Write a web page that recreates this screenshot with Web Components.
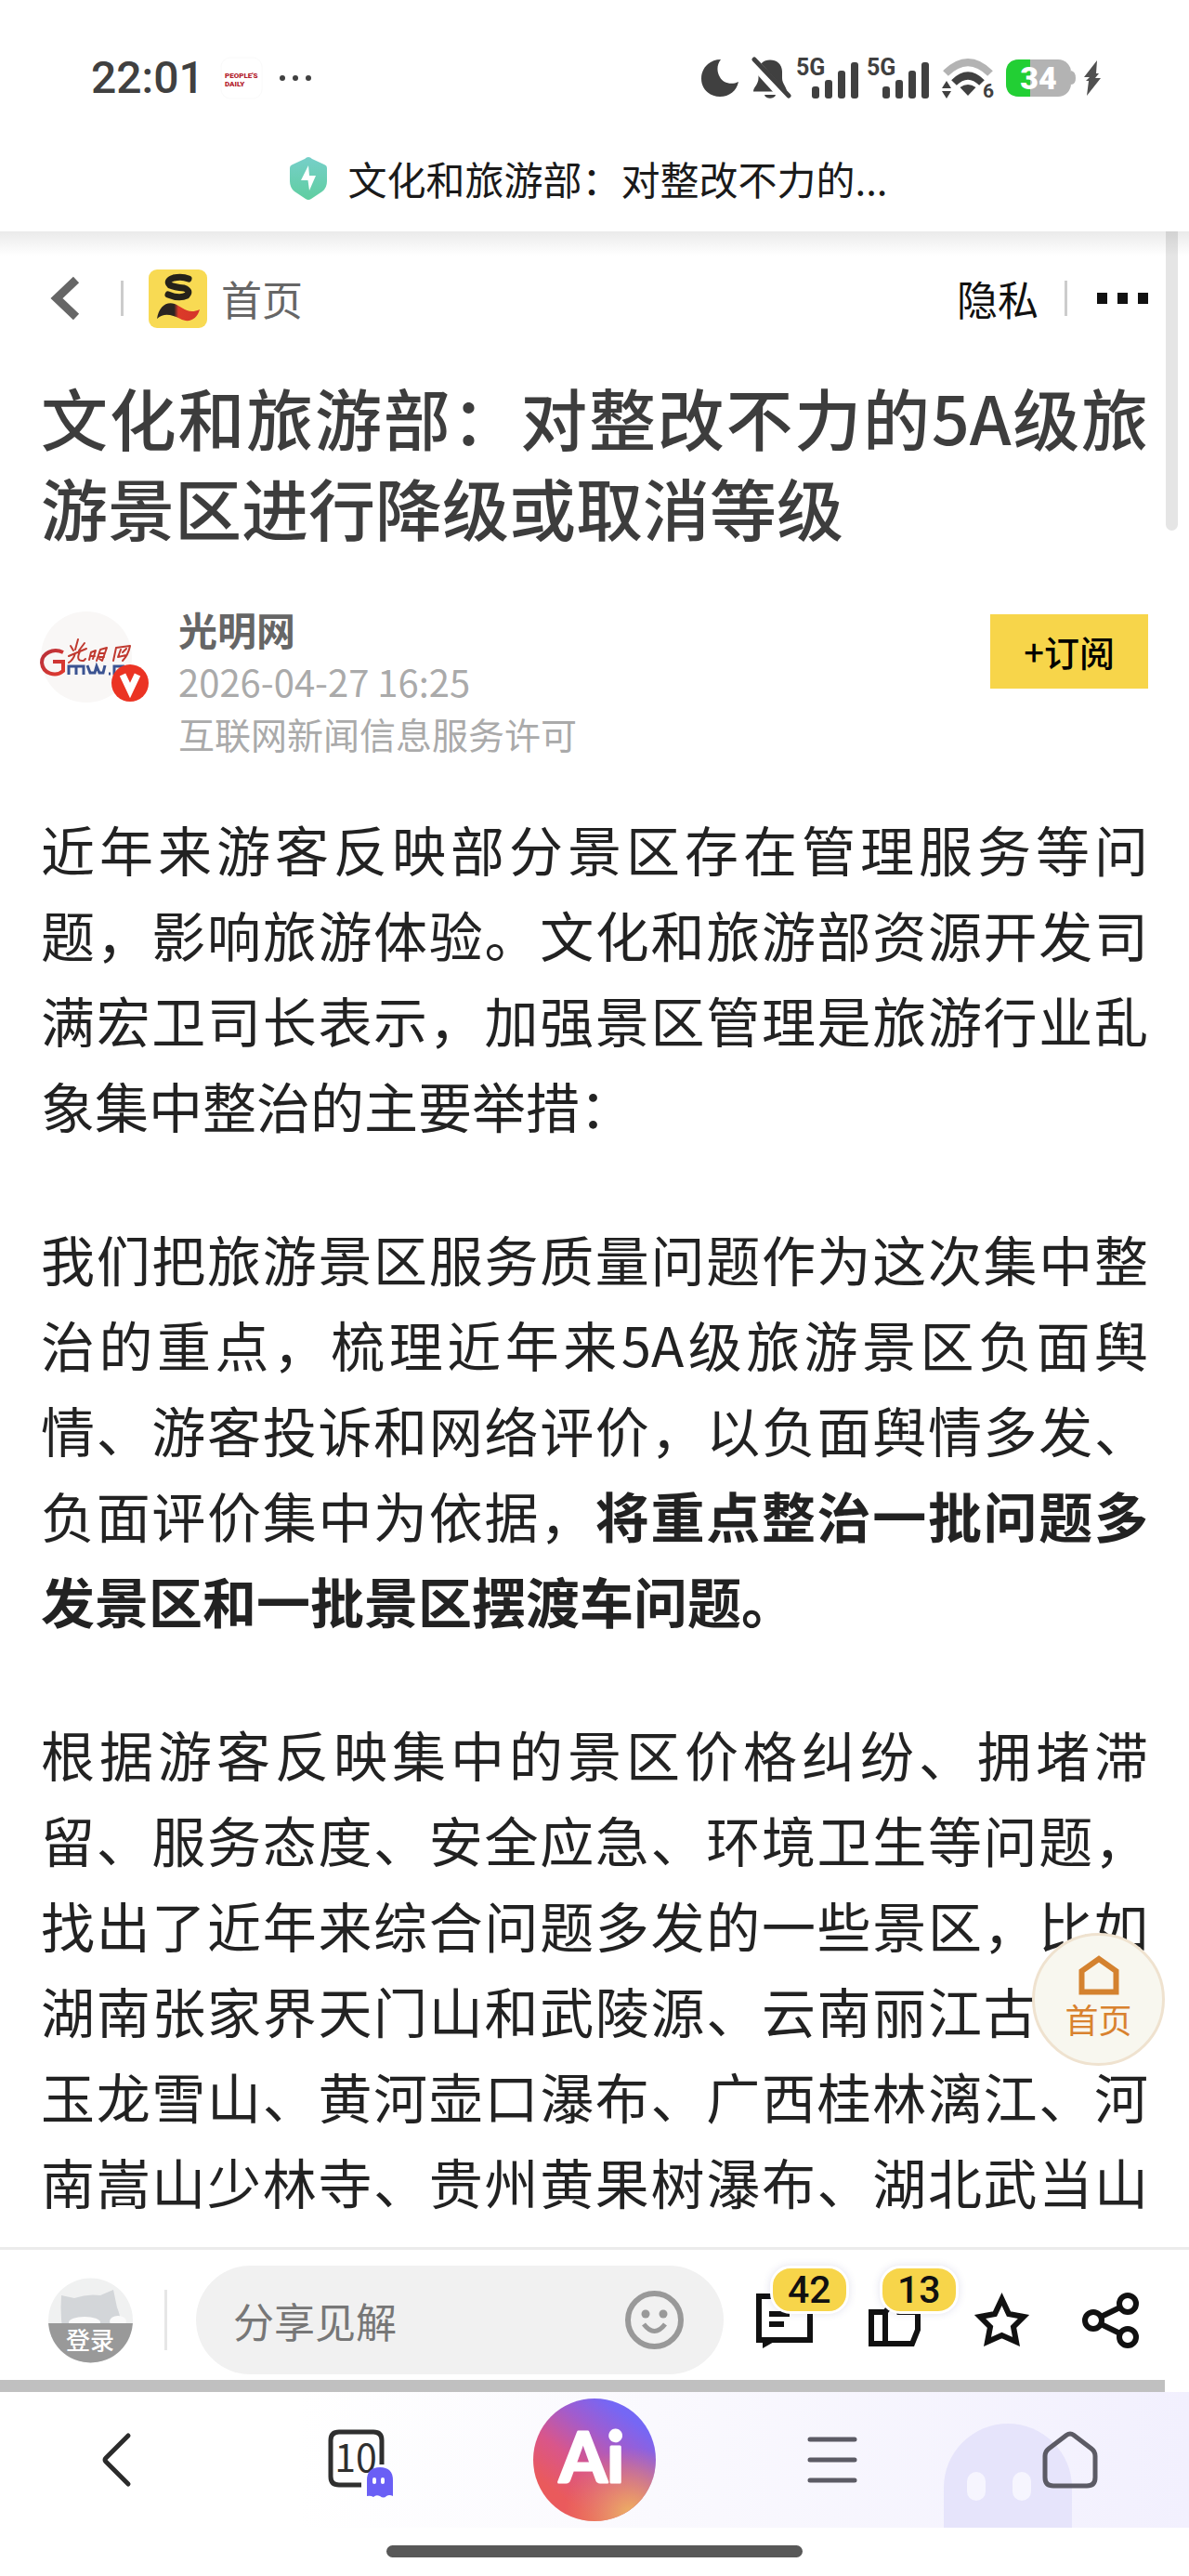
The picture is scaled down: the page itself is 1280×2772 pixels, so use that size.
<!DOCTYPE html>
<html lang="zh-CN">
<head>
<meta charset="utf-8">
<meta name="viewport" content="width=device-width, initial-scale=1">
<title>文化和旅游部：对整改不力的5A级旅游景区进行降级或取消等级</title>
<style>
    :root {
        --yellow: #f7d54a;
        --status-ink: #404040;
        --font-cjk: "Noto Sans CJK SC", "Noto Sans", sans-serif;
        --font-num: Roboto, "Noto Sans CJK SC", sans-serif;
        --edge: 44px;
    }
    body {
        margin: 0;
        min-height: 100vh;
        display: flex;
        flex-direction: column;
        background: #fff;
        font-family: var(--font-cjk);
        color: #222;
    }
    main {
        flex: 1;
        position: relative;
    }
</style>
</head>
<body>
<status-bar time="22:01" battery="34"></status-bar>
<title-bar>文化和旅游部：对整改不力的...</title-bar>
<main>
    <site-header></site-header>
    <news-article>
        <span slot="title">文化和旅游部：对整改不力的5A级旅游景区进行降级或取消等级</span>
        <article-author slot="author" name="光明网" date="2026-04-27 16:25" licence="互联网新闻信息服务许可"></article-author>
        <p>近年来游客反映部分景区存在管理服务等问题，影响旅游体验。文化和旅游部资源开发司满宏卫司长表示，加强景区管理是旅游行业乱象集中整治的主要举措：</p>
        <p>我们把旅游景区服务质量问题作为这次集中整治的重点，梳理近年来5A级旅游景区负面舆情、游客投诉和网络评价，以负面舆情多发、负面评价集中为依据，<strong>将重点整治一批问题多发景区和一批景区摆渡车问题。</strong></p>
        <p>根据游客反映集中的景区价格纠纷、拥堵滞留、服务态度、安全应急、环境卫生等问题，找出了近年来综合问题多发的一些景区，比如湖南张家界天门山和武陵源、云南丽江古城、玉龙雪山、黄河壶口瀑布、广西桂林漓江、河南嵩山少林寺、贵州黄果树瀑布、湖北武当山</p>
    </news-article>
    <home-float>首页</home-float>
</main>
<comment-bar comments="42" likes="13"></comment-bar>
<browser-nav tabs="10"></browser-nav>

<script>
const RESET = `
    * { box-sizing: border-box; }
    svg { display: block; flex: none; }
    button {
        display: block;
        margin: 0;
        padding: 0;
        border: 0;
        background: none;
        font: inherit;
        color: inherit;
        cursor: pointer;
    }
    a { color: inherit; text-decoration: none; }
`;

/* Small base class: each element only supplies its template */
class BaseElement extends HTMLElement {
    constructor() {
        super();
        this.attachShadow({ mode: 'open' });
    }

    connectedCallback() {
        this.shadowRoot.innerHTML = `<style>${RESET}</style>${this.template()}`;
    }

    attr(name) {
        return this.getAttribute(name) || '';
    }
}

const signalIcon = () => `
    <svg class="signal" width="70" height="62" viewBox="-2 -8 70 62" aria-label="5G">
        <text x="0" y="20" font-family="Roboto, sans-serif" font-weight="700" font-size="25" fill="#404040">5G</text>
        <g fill="#404040">
            <rect x="17" y="32" width="8" height="13" rx="3"/>
            <rect x="31" y="25" width="8" height="20" rx="3"/>
            <rect x="45" y="15" width="8" height="30" rx="3"/>
            <rect x="59" y="6" width="8" height="39" rx="3"/>
        </g>
    </svg>
`;

class StatusBar extends BaseElement {
    template() {
        return `
            <style>
                :host {
                    display: flex;
                    align-items: center;
                    justify-content: space-between;
                    height: 168px;
                    padding: 0 95px 0 98px;
                    font-family: var(--font-num);
                    color: var(--status-ink);
                }
                div { display: flex; align-items: center; }
                .time { font-size: 48px; font-weight: 500; line-height: 60px; }
                .left { gap: 17px; }
                .right { gap: 9px; }
                .bell { margin-left: 3px; }
                .signal { margin: 0 3px 0 -6px; }
            </style>
            <div class="left">
                <span class="time">${this.attr('time')}</span>
                <svg width="46" height="52" viewBox="0 0 46 52">
                    <rect x="1" y="4" width="44" height="44" rx="10" fill="#fff" stroke="#fafafa"/>
                    <g font-family="Roboto, sans-serif" font-weight="900" font-size="8" fill="#b3202c">
                        <text x="5" y="26">PEOPLE'S</text>
                        <text x="5" y="35">DAILY</text>
                    </g>
                </svg>
                <svg width="36" height="8" viewBox="0 0 36 8" fill="#404040">
                    <circle cx="4" cy="4" r="3"/><circle cx="18" cy="4" r="3"/><circle cx="32" cy="4" r="3"/>
                </svg>
            </div>
            <div class="right">
                <svg width="42" height="42" viewBox="0 0 42 42">
                    <path d="M22 1C10 1 1 10 1 21.500C1 33 10 41 21 41C31 41 39 35 41 25C33 29 24 26 21 20C17 13 18 6 22 1z" fill="#404040"/>
                </svg>
                <svg class="bell" width="44" height="48" viewBox="0 0 44 48">
                    <path d="M21 4.500C28 4.500 34 9 34 17V24C34 30 39 34 39 38.500H3C3 34 8.500 31 8.500 24V17C8.500 9 14 4.500 21 4.500z" fill="#404040"/>
                    <path d="M15 42h12c-1 5-11 5-12 0z" fill="#404040"/>
                    <path d="M0 4L39 47" stroke="#fff" stroke-width="11"/>
                    <path d="M0 0H11L8 14V22H0z" fill="#fff"/>
                    <path d="M4 4L41 43" stroke="#404040" stroke-width="5" stroke-linecap="round"/>
                </svg>
                ${signalIcon()}
                ${signalIcon()}
                <svg width="60" height="56" viewBox="0 -6 60 56">
                    <path d="M5 17Q29 -7 53 17" fill="none" stroke="#b3b3b3" stroke-width="8"/>
                    <path d="M14 27Q29 12 44 27" fill="none" stroke="#404040" stroke-width="8"/>
                    <path d="M29 41L20.500 32Q29 26 37.500 32z" fill="#404040"/>
                    <path d="M6 25L11 33H1z M6 44L11 36H1z" fill="#404040"/>
                    <text x="45" y="43" font-family="Roboto, sans-serif" font-weight="700" font-size="21" fill="#404040">6</text>
                </svg>
                <svg width="76" height="42" viewBox="0 0 76 42">
                    <rect x="1" y="1" width="70" height="40" rx="14" fill="#b3b3b3"/>
                    <path d="M27 1V41H15C6 41 1 36 1 27V15C1 6 6 1 15 1z" fill="#22cf34"/>
                    <path d="M71 13Q76 14 76 21Q76 28 71 28z" fill="#b3b3b3"/>
                    <text x="36" y="33" text-anchor="middle" font-family="Roboto, sans-serif" font-weight="900" font-size="34" fill="#fff">${this.attr('battery')}</text>
                </svg>
                <svg width="18" height="40" viewBox="0 0 18 40">
                    <path d="M14 1L0 19H6L2 23H5L3 39L18 20H12L16 15H13z" fill="#505050"/>
                </svg>
            </div>
        `;
    }
}

class TitleBar extends BaseElement {
    template() {
        return `
            <style>
                :host {
                    display: flex;
                    justify-content: center;
                    align-items: center;
                    gap: 22px;
                    padding: 0 12px 33px 0;
                    font-size: 42px;
                    line-height: 48px;
                    color: #1a1a1a;
                }
            </style>
            <svg width="40" height="46" viewBox="0 0 40 46">
                <defs>
                    <linearGradient id="shield" x1="0" y1="0" x2="0" y2="1">
                        <stop offset="0" stop-color="#76cfc9"/>
                        <stop offset="1" stop-color="#5fcea0"/>
                    </linearGradient>
                </defs>
                <path d="M20 0Q22 0 24 2L37 8Q40 9 40 12V26Q40 33 35 37L23 45Q20 47 17 45L5 37Q0 33 0 26V12Q0 9 3 8L16 2Q18 0 20 0z" fill="url(#shield)"/>
                <path d="M20 9L12 25H19.500L21 36L28 20H21z" fill="#fff"/>
            </svg>
            <span><slot></slot></span>
        `;
    }
}

class SiteHeader extends BaseElement {
    template() {
        return `
            <style>
                :host {
                    display: flex;
                    justify-content: space-between;
                    align-items: center;
                    height: 144px;
                    padding: 0 var(--edge) 0 54px;
                    font-size: 44px;
                    line-height: 52px;
                    background: linear-gradient(#eaeaea, #fff 26px);
                }
                nav, a { display: flex; align-items: center; }
                i { width: 3px; height: 38px; background: #ccc; }
                .home { gap: 15px; color: #666; }
                .left i { margin: 0 27px 0 44px; }
                .right { color: #111; }
                .right i { margin: 0 32px 0 28px; }
                .scroll {
                    position: absolute;
                    top: 0;
                    right: 12px;
                    width: 13px;
                    height: 322px;
                    border-radius: 0 0 7px 7px;
                    background: rgba(0, 0, 0, 0.1);
                }
            </style>
            <nav class="left">
                <button aria-label="返回">
                    <svg width="32" height="48" viewBox="0 0 32 48">
                        <path d="M28 4L7 24L28 44" fill="none" stroke="#666" stroke-width="9"/>
                    </svg>
                </button>
                <i></i>
                <a class="home" href="#">
                    <svg width="63" height="63" viewBox="0 0 63 63">
                        <defs>
                            <linearGradient id="brush" x1="0" x2="1">
                                <stop offset="0.4" stop-color="#2b2421"/>
                                <stop offset="0.5" stop-color="#dc3a28"/>
                                <stop offset="1" stop-color="#d4352a"/>
                            </linearGradient>
                        </defs>
                        <rect width="63" height="63" rx="9" fill="#f8da53"/>
                        <path d="M43 10Q36 7 27 9Q18 12 23 17Q28 19 38 20Q46 23 41 28Q33 32 21 27" fill="none" stroke="#25221a" stroke-width="7" stroke-linecap="round"/>
                        <path d="M9 53C11 40 19 34 28 37C36 40 42 49 55 43C52 54 43 58 34 53C25 49 17 46 9 53z" fill="url(#brush)"/>
                    </svg>
                    <span>首页</span>
                </a>
            </nav>
            <nav class="right">
                <a href="#">隐私</a>
                <i></i>
                <button aria-label="更多">
                    <svg width="55" height="12" viewBox="0 0 55 12" fill="#111">
                        <rect width="11" height="12"/><rect x="22" width="11" height="12"/><rect x="44" width="11" height="12"/>
                    </svg>
                </button>
            </nav>
            <div class="scroll"></div>
        `;
    }
}

class ArticleAuthor extends BaseElement {
    template() {
        return `
            <style>
                :host {
                    display: flex;
                    align-items: flex-start;
                    gap: 28px;
                    line-height: 56px;
                }
                svg { margin: 8px 0 0; overflow: visible; }
                .meta { flex: 1; color: #aaa; }
                .name { font-size: 42px; font-weight: 700; color: #666; }
                .date { font-size: 40px; }
                .licence { font-size: 39px; }
                button {
                    height: 80px;
                    margin-top: 12px;
                    padding: 0 36px;
                    background: var(--yellow);
                    font-size: 38px;
                    font-weight: 500;
                    color: #000;
                }
            </style>
            <svg width="120" height="100" viewBox="43 659 120 100">
                <defs>
                    <linearGradient id="red" x1="0" y1="0" x2="1" y2="1">
                        <stop offset="0" stop-color="#b8303a"/>
                        <stop offset="1" stop-color="#e03a30"/>
                    </linearGradient>
                </defs>
                <circle cx="92" cy="709" r="49" fill="#f9f7f6"/>
                <path d="M67 704C56 699 44 705 44 715C45 727 59 731 67 724V714H56" fill="none" stroke="url(#red)" stroke-width="4"/>
                <g fill="none" stroke="#c0392f" stroke-width="2" stroke-linecap="round" stroke-linejoin="round">
                    <path d="M83 690L80 701M75 697L78 702M90 694L84 702M73 708L92 700M80 705Q78 712 73 715M85 703Q80 714 89 713L91 711"/>
                    <path d="M97 704L95 712M97 704L102 702L99 711M97 708H101M107 701L114 699L109 713L106 711M106 705H112M106 709H111M107 701L103 713"/>
                    <path d="M124 699L121 713M124 699L139 697Q137 707 131 713M129 701L126 709L135 707M135 700L131 704"/>
                </g>
                <path d="M73 728V719H89V728M81 719V728M93 718L96 726H101L103 719L106 726H110L112 718M116 727H118M133 719H122V727H133" fill="none" stroke="#3b5391" stroke-width="3"/>
                <circle cx="139" cy="737" r="20" fill="#eb3323"/>
                <path d="M131 728L139 745L147 728" fill="none" stroke="#fff" stroke-width="7"/>
            </svg>
            <div class="meta">
                <div class="name">${this.attr('name')}</div>
                <div class="date">${this.attr('date')}</div>
                <div class="licence">${this.attr('licence')}</div>
            </div>
            <button>+订阅</button>
        `;
    }
}

class NewsArticle extends BaseElement {
    template() {
        return `
            <style>
                :host {
                    display: block;
                    padding: 6px var(--edge) 0;
                }
                h1 {
                    margin: 0 0 56px;
                    font-size: 72px;
                    font-weight: 500;
                    line-height: 97px;
                    text-align: justify;
                    color: #3d3d3d;
                }
                .body {
                    margin-top: 50px;
                    font-size: 58px;
                    line-height: 92px;
                    text-align: justify;
                }
                ::slotted(p) { margin: 0 0 73px; }
                /* the last paragraph runs on below the fold */
                ::slotted(p:last-child) { margin: 0; text-align-last: justify; }
            </style>
            <article>
                <h1><slot name="title"></slot></h1>
                <slot name="author"></slot>
                <div class="body"><slot></slot></div>
            </article>
        `;
    }
}

class HomeFloat extends BaseElement {
    template() {
        return `
            <style>
                :host {
                    position: absolute;
                    right: 26px;
                    bottom: 195px;
                }
                a {
                    display: flex;
                    flex-direction: column;
                    align-items: center;
                    width: 143px;
                    height: 143px;
                    padding-top: 21px;
                    border: 3px solid #efe2cf;
                    border-radius: 50%;
                    background: #f8f7ef;
                    font-size: 36px;
                    line-height: 50px;
                    color: #d9822f;
                }
            </style>
            <a href="#">
                <svg width="44" height="43" viewBox="0 0 44 43">
                    <path d="M3.500 39.500V17L22 4L40.500 17V39.500z" fill="none" stroke="#d4822f" stroke-width="6"/>
                </svg>
                <slot></slot>
            </a>
        `;
    }
}

class CommentBar extends BaseElement {
    template() {
        return `
            <style>
                :host {
                    display: block;
                    border-top: 3px solid #ebebeb;
                }
                .row {
                    display: flex;
                    align-items: center;
                    height: 140px;
                    padding: 11px 54px 0 52px;
                }
                .sep { width: 3px; height: 65px; margin: 0 31px 0 34px; background: #e6e6e6; }
                label {
                    flex: 1;
                    display: flex;
                    align-items: center;
                    min-width: 0;
                    height: 117px;
                    padding: 0 43px 0 40px;
                    margin-right: 35px;
                    border-radius: 59px;
                    background: #f1f1f1;
                }
                input {
                    flex: 1;
                    min-width: 0;
                    padding: 0;
                    border: 0;
                    outline: 0;
                    background: none;
                    font: 44px/60px var(--font-cjk);
                }
                input::placeholder { color: #777; opacity: 1; }
                .tools { display: flex; gap: 55px; }
                .tools button { position: relative; }
                .badge {
                    position: absolute;
                    left: 15px;
                    top: -28px;
                    padding: 0 16px;
                    border: 3px solid #fff;
                    border-radius: 22px;
                    background: var(--yellow);
                    box-shadow: 0 0 8px rgba(60, 60, 140, 0.15);
                    font: 500 41px/46px var(--font-num);
                    color: #111;
                }
                .strip { height: 13px; margin-right: 26px; background: #c0c0c0; }
            </style>
            <div class="row">
                <button aria-label="登录">
                    <svg width="91" height="92" viewBox="0 0 91 92">
                        <defs><clipPath id="face"><circle cx="45.500" cy="46" r="45.500"/></clipPath></defs>
                        <g clip-path="url(#face)">
                            <rect width="91" height="92" fill="#f0f1f1"/>
                            <path d="M14 19L28 22Q42 17 56 19L70 13L74 32Q80 45 78 70H18Q12 46 14 19z" fill="#d3d6d9"/>
                            <ellipse cx="39" cy="48" rx="17" ry="6" fill="#fafafa"/>
                            <ellipse cx="75" cy="47" rx="9" ry="6" fill="#fafafa"/>
                            <path d="M0 49H91V92H0z" fill="#999"/>
                        </g>
                        <text x="45" y="77" text-anchor="middle" font-family="Noto Sans CJK SC, sans-serif" font-weight="500" font-size="26" fill="#fff">登录</text>
                    </svg>
                </button>
                <span class="sep"></span>
                <label>
                    <input type="text" placeholder="分享见解" aria-label="分享见解">
                    <svg width="63" height="63" viewBox="0 0 63 63">
                        <circle cx="31.500" cy="31.500" r="28.500" fill="none" stroke="#999" stroke-width="6"/>
                        <circle cx="22" cy="25" r="4.500" fill="#999"/><circle cx="41" cy="25" r="4.500" fill="#999"/>
                        <path d="M20 36Q31.500 51 43 36" fill="none" stroke="#999" stroke-width="5"/>
                    </svg>
                </label>
                <div class="tools">
                    <button aria-label="评论">
                        <svg width="63" height="62" viewBox="0 0 63 62" fill="none" stroke="#111" stroke-width="6">
                            <path d="M3 5H58V52H3z"/>
                            <path d="M14 24H36M14 35H30"/>
                            <path d="M7 52V61L21 53z" fill="#111" stroke="none"/>
                        </svg>
                        <span class="badge">${this.attr('comments')}</span>
                    </button>
                    <button aria-label="点赞">
                        <svg width="60" height="62" viewBox="0 0 60 62" fill="none" stroke="#111" stroke-width="6">
                            <path d="M6 22H21V56H6z"/>
                            <path d="M21 22L32 8L36 22H56V41L50 56H21"/>
                        </svg>
                        <span class="badge">${this.attr('likes')}</span>
                    </button>
                    <button aria-label="收藏">
                        <svg width="63" height="62" viewBox="0 0 63 62">
                            <path d="M31.500 8L39 24L55 27L44 38L47 54L31.500 47L16 54L19 38L8 27L24 24z" fill="none" stroke="#111" stroke-width="6"/>
                        </svg>
                    </button>
                    <button aria-label="分享">
                        <svg width="61" height="62" viewBox="0 0 61 62" fill="none" stroke="#111" stroke-width="6">
                            <path d="M12 31L49 13M12 31L49 49"/>
                            <g fill="#fff"><circle cx="12" cy="31" r="9"/><circle cx="49" cy="13" r="9"/><circle cx="49" cy="49" r="9"/></g>
                        </svg>
                    </button>
                </div>
            </div>
            <div class="strip"></div>
        `;
    }
}

class BrowserNav extends BaseElement {
    template() {
        return `
            <style>
                :host { display: block; }
                nav {
                    position: relative;
                    display: grid;
                    grid-template-columns: repeat(5, 1fr);
                    place-items: center;
                    height: 146px;
                    background: linear-gradient(90deg, #fff 25%, #faf9fe 55%, #f2f0fe);
                }
                .mascot { position: absolute; right: 126px; bottom: 0; }
                .indicator {
                    width: 35%;
                    height: 13px;
                    margin: 19px auto 20px;
                    border-radius: 7px;
                    background: #585858;
                }
                button { position: relative; }
            </style>
            <nav>
                <svg class="mascot" width="138" height="112" viewBox="0 0 138 112">
                    <path d="M0 112V69A69 69 0 0 1 138 69V112z" fill="#e6e4fb"/>
                    <rect x="25" y="52" width="20" height="31" rx="10" fill="#f6f5fe"/>
                    <rect x="74" y="52" width="20" height="31" rx="10" fill="#f6f5fe"/>
                </svg>
                <button aria-label="后退">
                    <svg width="38" height="60" viewBox="0 0 38 60">
                        <path d="M29 4L5 28Q3 30 5 32L29 56" fill="none" stroke="#2b2b2b" stroke-width="5" stroke-linecap="round"/>
                    </svg>
                </button>
                <button aria-label="标签页">
                    <svg width="80" height="84" viewBox="-9 -10 80 84">
                        <path d="M58 37V11Q58 2 49 2H12Q3 2 3 11V50Q3 59 12 59H36" fill="none" stroke="#2f2f2f" stroke-width="5"/>
                        <text x="30" y="45" text-anchor="middle" font-family="Noto Sans CJK SC, sans-serif" font-size="41" fill="#2f2f2f">${this.attr('tabs')}</text>
                        <path d="M42 54Q42 40 56 40Q70 40 70 54V71Q66 69 63 71Q60 74 56 71Q52 69 49 72Q46 70 42 71z" fill="#6a5ff5"/>
                        <rect x="48" y="51" width="4" height="7" rx="2" fill="#fff"/><rect x="57" y="51" width="4" height="7" rx="2" fill="#fff"/>
                    </svg>
                </button>
                <button aria-label="Ai">
                    <svg width="132" height="132" viewBox="0 0 132 132">
                        <defs>
                            <linearGradient id="ai" x1="0.2" y1="0.9" x2="0.8" y2="0.1">
                                <stop offset="0.1" stop-color="#ea5a5c"/>
                                <stop offset="0.4" stop-color="#d9568a"/>
                                <stop offset="0.7" stop-color="#a05ccf"/>
                                <stop offset="0.95" stop-color="#7567f5"/>
                            </linearGradient>
                            <radialGradient id="glow" cx="0.8" cy="0.95" r="0.55">
                                <stop offset="0.1" stop-color="#eba866"/>
                                <stop offset="1" stop-color="#eb8a60" stop-opacity="0"/>
                            </radialGradient>
                        </defs>
                        <circle cx="66" cy="66" r="66" fill="url(#ai)"/>
                        <circle cx="66" cy="66" r="66" fill="url(#glow)"/>
                        <text x="63" y="90" text-anchor="middle" font-family="Lato, sans-serif" font-weight="700" font-size="74" fill="#fff" stroke="#fff" stroke-width="3" stroke-linejoin="round">Ai</text>
                    </svg>
                </button>
                <button aria-label="菜单">
                    <svg width="56" height="52" viewBox="0 0 56 52">
                        <path d="M4 4H52M4 26H52M4 48H52" stroke="#5c5b65" stroke-width="5" stroke-linecap="round"/>
                    </svg>
                </button>
                <button aria-label="主页">
                    <svg width="60" height="62" viewBox="0 0 60 62">
                        <path d="M26 4.500Q30 1.500 34 4.500L53 19Q57 22 57 27V50Q57 59 48 59H12Q3 59 3 50V27Q3 22 7 19z" fill="none" stroke="#5c5b65" stroke-width="5"/>
                    </svg>
                </button>
            </nav>
            <div class="indicator"></div>
        `;
    }
}

customElements.define('status-bar', StatusBar);
customElements.define('title-bar', TitleBar);
customElements.define('site-header', SiteHeader);
customElements.define('article-author', ArticleAuthor);
customElements.define('news-article', NewsArticle);
customElements.define('home-float', HomeFloat);
customElements.define('comment-bar', CommentBar);
customElements.define('browser-nav', BrowserNav);
</script>
</body>
</html>
